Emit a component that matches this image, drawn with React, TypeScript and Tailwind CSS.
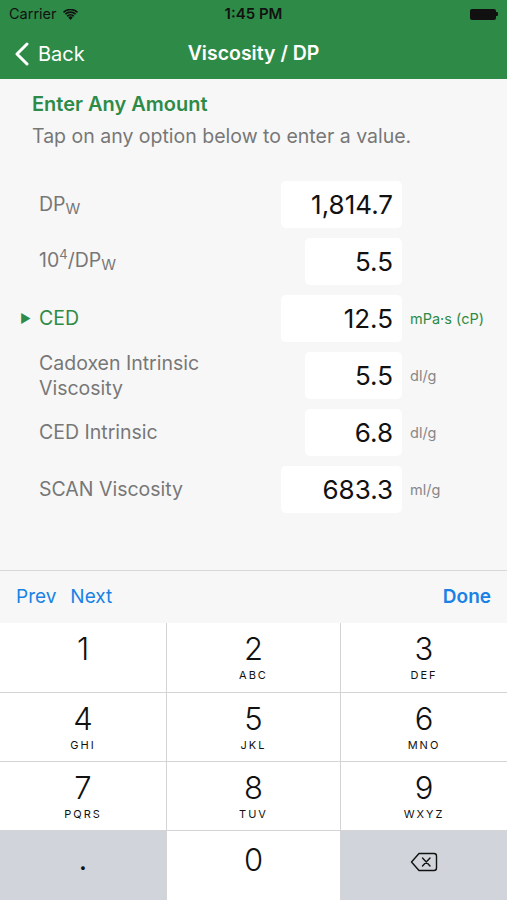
import type { FunctionComponent, ReactNode } from "react";

const font = { fontFamily: '"Inter", "Liberation Sans", sans-serif' };

type Row = {
  label: ReactNode;
  value: string;
  unit?: string;
  wide: boolean;
  active?: boolean;
};

const rows: Row[] = [
  {
    label: (
      <>
        DP<span className="text-[15px] relative top-[3px]">W</span>
      </>
    ),
    value: "1,814.7",
    wide: true,
  },
  {
    label: (
      <>
        10<span className="text-[13px] relative -top-[8px]">4</span>/DP
        <span className="text-[15px] relative top-[3px]">W</span>
      </>
    ),
    value: "5.5",
    wide: false,
  },
  { label: "CED", value: "12.5", unit: "mPa·s (cP)", wide: true, active: true },
  {
    label: (
      <>
        Cadoxen Intrinsic
        <br />
        Viscosity
      </>
    ),
    value: "5.5",
    unit: "dl/g",
    wide: false,
  },
  { label: "CED Intrinsic", value: "6.8", unit: "dl/g", wide: false },
  { label: "SCAN Viscosity", value: "683.3", unit: "ml/g", wide: true },
];

const keys = [
  ["1", ""],
  ["2", "ABC"],
  ["3", "DEF"],
  ["4", "GHI"],
  ["5", "JKL"],
  ["6", "MNO"],
  ["7", "PQRS"],
  ["8", "TUV"],
  ["9", "WXYZ"],
];

const Wifi = () => (
  <svg width="15" height="11" viewBox="0 0 15 11">
    <path d="M7.5 11 L5.3 8.4 A3.2 3.2 0 0 1 9.7 8.4 Z" fill="#111" />
    <path d="M3.6 6.6 A5.6 5.6 0 0 1 11.4 6.6 L10.2 7.9 A3.9 3.9 0 0 0 4.8 7.9 Z" fill="#111" />
    <path d="M1.8 4.6 A8.2 8.2 0 0 1 13.2 4.6 L12.1 5.8 A6.6 6.6 0 0 0 2.9 5.8 Z" fill="#111" />
    <path d="M0 2.7 A10.8 10.8 0 0 1 15 2.7 L14 3.9 A9.3 9.3 0 0 0 1 3.9 Z" fill="#111" />
  </svg>
);

const Backspace = () => (
  <svg width="28" height="20" viewBox="0 0 28 20" fill="none" stroke="#111" strokeWidth="1.4">
    <path d="M9 1.5 H24 A2.5 2.5 0 0 1 26.5 4 V16 A2.5 2.5 0 0 1 24 18.5 H9 L1.5 10 Z" strokeLinejoin="round" />
    <path d="M12.5 6 L20 14 M20 6 L12.5 14" strokeLinecap="round" />
  </svg>
);

const App: FunctionComponent = () => (
  <div className="w-[507px] h-[900px] flex flex-col bg-[#f7f7f7] overflow-hidden" style={font}>
    <header className="bg-[#2e8b47] text-white">
      <div className="h-[28px] flex items-center px-[9px] text-[14.5px] text-[#111] relative">
        <span className="flex items-center gap-[6px]">
          Carrier <Wifi />
        </span>
        <span className="absolute left-1/2 -translate-x-1/2 font-semibold text-[15px]">1:45 PM</span>
        <span className="ml-auto flex items-center">
          <span className="w-[26px] h-[11px] bg-[#111] rounded-[2px]" />
          <span className="w-[2px] h-[4px] bg-[#111] rounded-r-[1px]" />
        </span>
      </div>
      <div className="h-[51px] flex items-center relative">
        <div className="flex items-center pl-[15px] gap-[9px] text-[20px]">
          <svg width="14" height="24" viewBox="0 0 14 24" fill="none" stroke="white" strokeWidth="3" strokeLinecap="round" strokeLinejoin="round">
            <path d="M12 2 L2 12 L12 22" />
          </svg>
          <span>Back</span>
        </div>
        <div className="absolute left-1/2 -translate-x-1/2 text-[19.5px] font-semibold">Viscosity / DP</div>
      </div>
    </header>

    <main className="flex-1 bg-[#f7f7f7]">
      <div className="pl-[32px] pt-[13px]">
        <div className="text-[20px] leading-[24px] font-semibold text-[#2e8b47]">Enter Any Amount</div>
        <div className="mt-[8px] text-[19.5px] leading-[24px] text-[#777]">Tap on any option below to enter a value.</div>
      </div>
      <div className="mt-[33px] flex flex-col gap-[10px]">
        {rows.map((row, i) => (
          <div key={i} className="flex items-center h-[47px]">
            <div className="w-[39px] flex justify-end pr-[8px]">
              {row.active ? <span className="text-[12px] text-[#2e8b47]">▶</span> : null}
            </div>
            <div
              className={`flex-1 text-[19.5px] leading-[25px] ${row.active ? "text-[#2e8b47]" : "text-[#777]"}`}
            >
              {row.label}
            </div>
            <div
              className={`${row.wide ? "w-[121px]" : "w-[97px]"} h-[47px] bg-white rounded-[5px] flex items-center justify-end pr-[9px] text-[26px] text-[#111]`}
            >
              {row.value}
            </div>
            <div
              className={`w-[105px] pl-[8px] text-[14.5px] ${row.active ? "text-[#2e8b47]" : "text-[#888]"}`}
            >
              {row.unit}
            </div>
          </div>
        ))}
      </div>
    </main>

    <div className="h-[53px] border-t border-[#d8d8d8] bg-[#f7f7f7] flex items-center px-[16px] text-[19px] text-[#1a82e5]">
      <span>Prev</span>
      <span className="ml-[14px]">Next</span>
      <span className="ml-auto font-semibold">Done</span>
    </div>

    <div className="h-[277px] grid grid-cols-[166px_1fr_166px] grid-rows-[69px_68px_68px_69px] gap-px bg-[#d4d4d6]">
      {keys.map(([digit, letters]) => (
        <div key={digit} className="bg-white flex flex-col items-center pt-[7px] text-[#111]">
          <span className="text-[31px] leading-[38px] font-light">{digit}</span>
          <span className="text-[11px] leading-[14px] tracking-[2px]">{letters}</span>
        </div>
      ))}
      <div className="bg-[#d1d5db] flex items-center justify-center text-[#111] text-[22px] font-bold pb-[6px]">.</div>
      <div className="bg-white flex items-center justify-center text-[31px] font-light text-[#111] pb-[10px]">0</div>
      <div className="bg-[#d1d5db] flex items-center justify-center pb-[8px]">
        <Backspace />
      </div>
    </div>
  </div>
);

export default App;
